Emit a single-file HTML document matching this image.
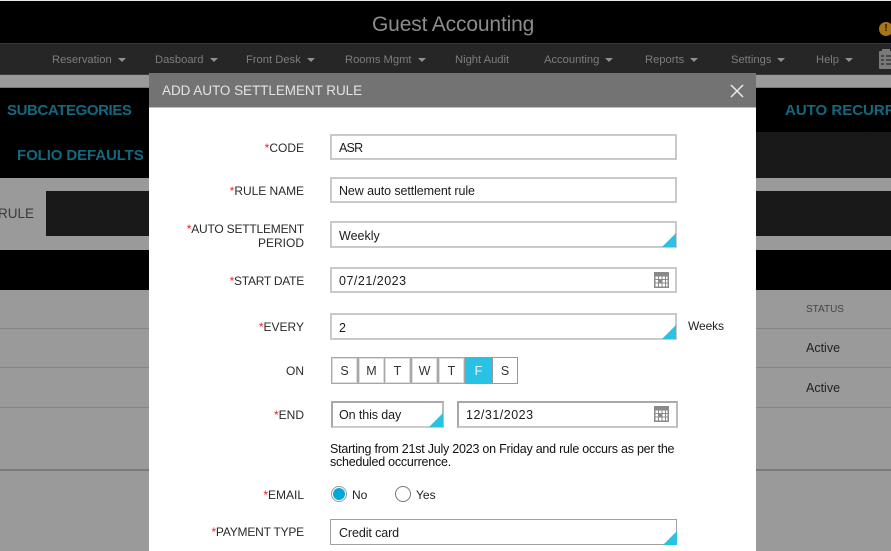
<!DOCTYPE html>
<html><head><meta charset="utf-8">
<style>
html,body{margin:0;padding:0;width:891px;height:551px;overflow:hidden;background:#9a9a9a}
body{position:relative;font-family:"Liberation Sans",sans-serif;color:#1a1a1a}
.b{position:absolute;box-sizing:border-box}
.t{position:absolute;white-space:nowrap;line-height:16px}
.nav{color:#7d7d7d;font-size:11.2px;top:52px}
.nav i{position:absolute;top:6px;right:-14px;border:4px solid transparent;border-top-color:#8f8f8f;border-bottom:0}
.tab{color:#12697f;font-weight:bold;font-size:15px;line-height:20px}
.l{font-size:12px;right:587px;text-align:right;color:#2a2a2a;margin-top:1px}
.l b{color:#e8212b;font-weight:normal}
.v{font-size:12.5px;left:339px;color:#1c1c1c;margin-top:1px}
.in{position:absolute;box-sizing:border-box;left:330px;width:347px;border:2px solid #c9c9c9;background:#fff}
.tri{position:absolute;right:-1px;bottom:-1px;width:0;height:0;border-left:14px solid transparent;border-bottom:14px solid #2ac1e6}
.d{position:absolute;box-sizing:border-box;top:357px;width:27px;height:27px;border:1px solid #a8a8a8;outline:1px solid #ddd;outline-offset:-2px;font-size:12.5px;line-height:26px;text-align:center;color:#333;background:#fff}
.row{position:absolute;left:0;width:891px;height:1px;background:#858585}
</style></head><body>
<div class="b" style="left:0;top:0;width:891px;height:1px;background:#e6e6e6"></div>
<div class="b" style="left:0;top:1px;width:891px;height:42px;background:#000"></div>
<div class="t" style="left:372px;top:12px;font-size:21px;line-height:26px;color:#8c8c8c;letter-spacing:-.15px">Guest Accounting</div>
<div class="b" style="left:879px;top:22px;width:14px;height:14px;border-radius:50%;background:#a8760f;color:#1c1400;font:bold 10px/14px 'Liberation Sans',sans-serif;text-align:center">!</div>
<div class="b" style="left:0;top:43px;width:891px;height:32px;background:#262626;border-top:1px solid #363636;border-bottom:1px solid #3c3c3c"></div>
<div class="t nav" style="left:52px">Reservation<i></i></div>
<div class="t nav" style="left:155px">Dasboard<i></i></div>
<div class="t nav" style="left:246px">Front Desk<i></i></div>
<div class="t nav" style="left:345px">Rooms Mgmt<i></i></div>
<div class="t nav" style="left:455px">Night Audit</div>
<div class="t nav" style="left:544px">Accounting<i></i></div>
<div class="t nav" style="left:645px">Reports<i></i></div>
<div class="t nav" style="left:731px">Settings<i></i></div>
<div class="t nav" style="left:816px">Help<i></i></div>
<svg class="b" style="left:879px;top:49px" width="14" height="20" viewBox="0 0 14 20"><rect x="0" y="2" width="14" height="18" rx="1" fill="#7a7a7a"/><rect x="3" y="0" width="8" height="4" fill="#7a7a7a"/><path d="M2 7h3M7 7h6M2 11h3M7 11h6M2 15h3M7 15h6" stroke="#2a2a2a" stroke-width="1.2"/></svg>

<div class="b" style="left:0;top:87px;width:891px;height:91px;background:#191919;border-top:1px solid #777"></div>
<div class="b" style="left:0;top:88px;width:891px;height:44px;background:#000"></div>
<div class="b" style="left:0;top:88px;width:149px;height:90px;background:#000"></div>
<div class="t tab" style="left:7px;top:101px;letter-spacing:-.4px">SUBCATEGORIES</div>
<div class="t tab" style="left:17px;top:146px;letter-spacing:-.1px">FOLIO DEFAULTS</div>
<div class="t tab" style="left:785px;top:101px">AUTO RECURR</div>

<div class="b" style="left:46px;top:191px;width:845px;height:45px;background:#191919"></div>
<div class="t" style="left:-2px;top:206px;font-size:13.5px;color:#3a3a3a">RULE</div>
<div class="b" style="left:0;top:250px;width:891px;height:40px;background:#000"></div>
<div class="row" style="top:328px"></div>
<div class="row" style="top:367px"></div>
<div class="row" style="top:407px"></div>
<div class="row" style="top:469px;height:2px;background:#7a7a7a"></div>
<div class="t" style="left:806px;top:302px;font-size:10px;color:#444">STATUS</div>
<div class="t" style="left:806px;top:340px;font-size:12.5px;color:#222">Active</div>
<div class="t" style="left:806px;top:380px;font-size:12.5px;color:#222">Active</div>

<!-- modal -->
<div class="b" style="left:149px;top:73px;width:607px;height:478px;background:#fff"></div>
<div class="b" style="left:149px;top:73px;width:607px;height:35px;background:#737373;border-bottom:1px solid #bcbcbc"></div>
<div class="t" style="left:162px;top:83px;font-size:13.5px;color:#e4e4e4;letter-spacing:-.05px">ADD AUTO SETTLEMENT RULE</div>
<svg class="b" style="left:729px;top:83px" width="16" height="16" viewBox="0 0 16 16"><path d="M2 2L14 14M14 2L2 14" stroke="#ececec" stroke-width="1.5"/></svg>

<div class="t l" style="top:139px"><b>*</b>CODE</div>
<div class="in" style="top:134px;height:26px"></div>
<div class="t v" style="top:139px;letter-spacing:-.8px">ASR</div>

<div class="t l" style="top:182px;letter-spacing:-.05px"><b>*</b>RULE NAME</div>
<div class="in" style="top:177px;height:26px"></div>
<div class="t v" style="top:182px;letter-spacing:-.1px">New auto settlement rule</div>

<div class="t l" style="top:220px;letter-spacing:-.2px"><b>*</b>AUTO SETTLEMENT</div>
<div class="t l" style="top:234px">PERIOD</div>
<div class="in" style="top:221px;height:27px"><div class="tri"></div></div>
<div class="t v" style="top:227px">Weekly</div>

<div class="t l" style="top:272px;letter-spacing:-.25px"><b>*</b>START DATE</div>
<div class="in" style="top:267px;height:26px"></div>
<div class="t v" style="top:272px;letter-spacing:.5px">07/21/2023</div>
<svg class="b" style="left:654px;top:272px" width="15" height="16" viewBox="0 0 15 16"><rect width="15" height="16" fill="#8a8a8a"/><path d="M1.5 4.5h2.5v2.5h-2.5zM5 4.5h2.5v2.5h-2.5zM8.5 4.5h2.5v2.5h-2.5zM12 4.5h1.5v2.5h-1.5zM1.5 8h2.5v2.5h-2.5zM8.5 8h2.5v2.5h-2.5zM12 8h1.5v2.5h-1.5zM1.5 11.5h2.5v3h-2.5zM5 11.5h2.5v3h-2.5zM8.5 11.5h2.5v3h-2.5zM12 11.5h1.5v3h-1.5z" fill="#fff"/></svg>

<div class="t l" style="top:318px"><b>*</b>EVERY</div>
<div class="in" style="top:313px;height:27px"><div class="tri"></div></div>
<div class="t v" style="top:319px">2</div>
<div class="t" style="left:688px;top:318px;font-size:12px;color:#222;letter-spacing:-.1px">Weeks</div>

<div class="t l" style="top:362px">ON</div>
<div class="d" style="left:331px">S</div>
<div class="d" style="left:358px">M</div>
<div class="d" style="left:384px">T</div>
<div class="d" style="left:411px">W</div>
<div class="d" style="left:438px">T</div>
<div class="d" style="left:465px;background:#2ac1e6;color:#e8f8fc;border-color:#2ac1e6;outline:0">F</div>
<div class="d" style="left:492px;width:26px;outline:0;border-color:#999">S</div>

<div class="t l" style="top:406px"><b>*</b>END</div>
<div class="in" style="left:331px;top:401px;width:113px;height:27px;border-color:#a8a8a8 #bbb #ccc #a8a8a8"><div class="tri"></div></div>
<div class="t v" style="top:406px;letter-spacing:-.1px">On this day</div>
<div class="in" style="left:457px;top:401px;width:221px;height:27px;border-color:#a8a8a8 #bbb #c6c6c6 #a8a8a8"></div>
<div class="t v" style="left:466px;top:406px;letter-spacing:.5px">12/31/2023</div>
<svg class="b" style="left:654px;top:406px" width="15" height="16" viewBox="0 0 15 16"><rect width="15" height="16" fill="#8a8a8a"/><path d="M1.5 4.5h2.5v2.5h-2.5zM5 4.5h2.5v2.5h-2.5zM8.5 4.5h2.5v2.5h-2.5zM12 4.5h1.5v2.5h-1.5zM1.5 8h2.5v2.5h-2.5zM8.5 8h2.5v2.5h-2.5zM12 8h1.5v2.5h-1.5zM1.5 11.5h2.5v3h-2.5zM5 11.5h2.5v3h-2.5zM8.5 11.5h2.5v3h-2.5zM12 11.5h1.5v3h-1.5z" fill="#fff"/></svg>

<div class="t" style="left:330px;top:441px;font-size:12.5px;color:#111;letter-spacing:-.23px">Starting from 21st July 2023 on Friday and rule occurs as per the</div>
<div class="t" style="left:330px;top:454px;font-size:12.5px;color:#111;letter-spacing:-.23px">scheduled occurrence.</div>

<div class="t l" style="top:486px"><b>*</b>EMAIL</div>
<div class="b" style="left:331px;top:486px;width:16px;height:16px;border-radius:50%;border:1px solid #999;background:#fff"></div>
<div class="b" style="left:333px;top:488px;width:12px;height:12px;border-radius:50%;background:#03a9d6"></div>
<div class="t" style="left:352px;top:487px;font-size:12px;color:#222">No</div>
<div class="b" style="left:395px;top:486px;width:16px;height:16px;border-radius:50%;border:1px solid #777;background:#fff"></div>
<div class="t" style="left:416px;top:487px;font-size:12px;color:#222">Yes</div>

<div class="t l" style="top:523px;letter-spacing:-.2px"><b>*</b>PAYMENT TYPE</div>
<div class="in" style="top:519px;height:26px;border-width:1.5px;border-color:#a0a0a0"><div class="tri"></div></div>
<div class="t v" style="top:524px;letter-spacing:-.1px">Credit card</div>
</body></html>
